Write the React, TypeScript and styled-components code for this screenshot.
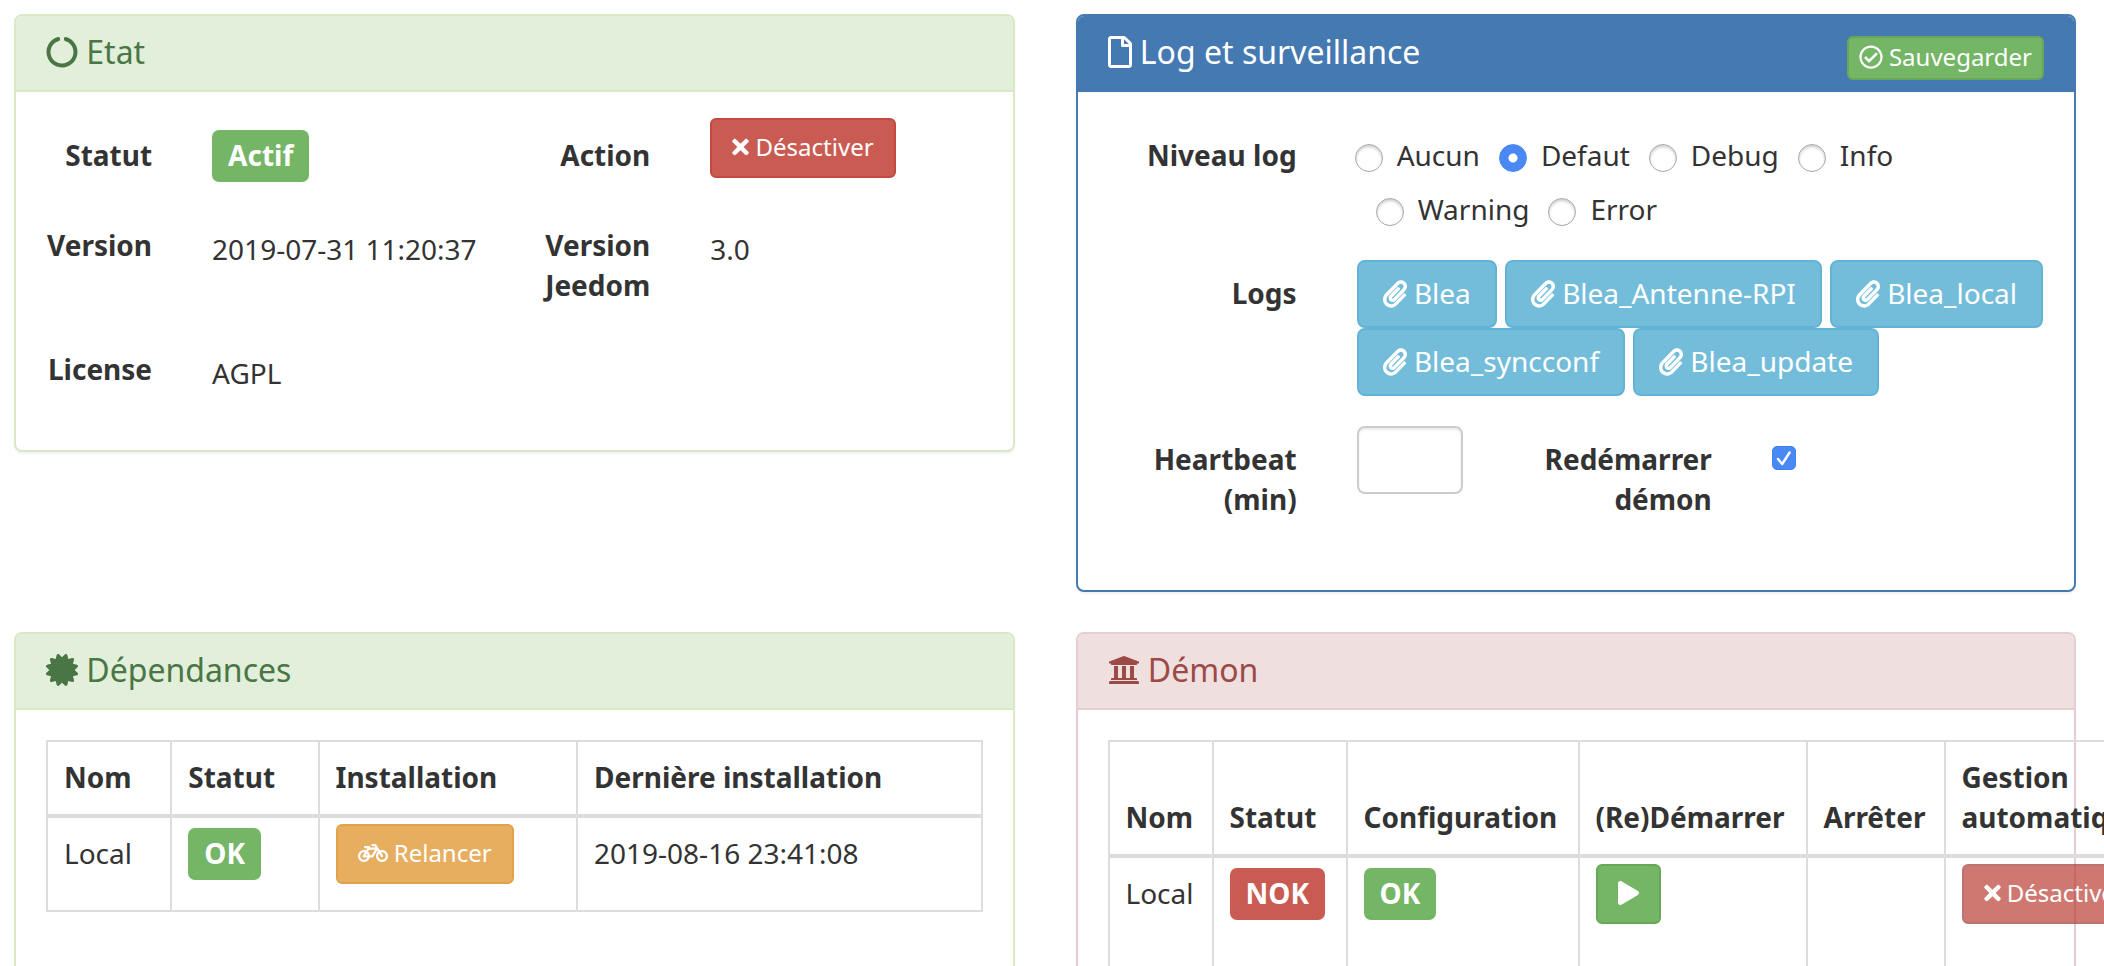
import React, { useState } from "react";
import styled, { createGlobalStyle, css } from "styled-components";
import {
  FaBicycle,
  FaCertificate,
  FaCircleNotch,
  FaPaperclip,
  FaPlay,
  FaRegCheckCircle,
  FaRegFile,
  FaTimes,
  FaUniversity,
} from "react-icons/fa";

const GlobalStyle = createGlobalStyle`
  *, *::before, *::after { box-sizing: border-box; }
  body {
    margin: 0;
    height: 100vh;
    overflow: hidden;
    background: #fff;
    color: #333;
    font: 28px/40px "Noto Sans", sans-serif;
  }
  button, input { font: inherit; color: inherit; }
  button svg, h3 svg { vertical-align: -0.125em; }
`;

const FileIcon = styled(FaRegFile)`
  width: 24px;
`;

const TimesIcon = styled(FaTimes)`
  width: 17px;
`;

const ClipIcon = styled(FaPaperclip)`
  width: 24px;
`;

const BicycleIcon = styled(FaBicycle)`
  width: 30px;
`;

const PlayIcon = styled(FaPlay)`
  width: 21px;
`;

type PanelTone = "success" | "primary" | "danger";
type Tone = "success" | "danger" | "warning" | "info";

const panelTones: Record<PanelTone, { head: string; border: string; text: string }> = {
  success: { head: "#e2efda", border: "#dbe8c8", text: "#4a7645" },
  primary: { head: "#4479b2", border: "#4479b2", text: "#fff" },
  danger: { head: "#efdfde", border: "#e6cdd1", text: "#9c4a45" },
};

const tones: Record<Tone, { fill: string; border: string }> = {
  success: { fill: "#74b566", border: "#67a858" },
  danger: { fill: "#c95b52", border: "#c44a41" },
  warning: { fill: "#e7ae60", border: "#e2a24c" },
  info: { fill: "#73bddb", border: "#62b3d5" },
};

const Page = styled.main`
  display: grid;
  grid-template-columns: repeat(2, minmax(0, 1fr));
  align-items: start;
  gap: 40px 61px;
  padding: 14px 28px 40px 14px;
`;

const PanelBox = styled.section<{ $tone: PanelTone }>`
  border: 2px solid ${(p) => panelTones[p.$tone].border};
  border-radius: 8px;
  background: #fff;
  box-shadow: 0 2px 2px rgba(0, 0, 0, 0.05);
`;

const PanelHead = styled.header<{ $tone: PanelTone }>`
  display: flex;
  align-items: flex-start;
  justify-content: space-between;
  height: 76px;
  padding: 20px 30px;
  border-bottom: 2px solid ${(p) => panelTones[p.$tone].border};
  border-radius: 6px 6px 0 0;
  background: ${(p) => panelTones[p.$tone].head};
  color: ${(p) => panelTones[p.$tone].text};
`;

const PanelTitle = styled.h3`
  margin: 0;
  font-size: 32px;
  font-weight: 400;
  line-height: 32px;
`;

const FormBody = styled.div<{ $tail: number }>`
  display: grid;
  gap: 30px;
  padding: 30px 0 ${(p) => p.$tail}px;
`;

const TableBody = styled.div`
  padding: 30px 30px 70px;
`;

const Row = styled.div<{ $columns: number[] }>`
  display: grid;
  grid-template-columns: ${(p) => p.$columns.map((n) => `minmax(0, ${n}fr)`).join(" ")};
`;

const labelStyle = css`
  padding: 13px 30px 1px;
  font-weight: 700;
  text-align: right;
`;

const Caption = styled.span`
  ${labelStyle}
`;

const FieldLabel = styled.label`
  ${labelStyle}
`;

const Value = styled.div`
  padding: 17px 30px 1px;
`;

const Control = styled.div`
  padding: 0 30px;
`;

const BadgeCell = styled.div`
  padding: 13px 30px 1px;
`;

const Badge = styled.span<{ $tone: Tone }>`
  padding: 6px 16px 8px;
  border-radius: 7px;
  background: ${(p) => tones[p.$tone].fill};
  color: #fff;
  font-weight: 700;
`;

const Button = styled.button<{ $tone: Tone; $size?: "xs" | "sm"; $raise?: number }>`
  display: inline-block;
  margin: ${(p) => (p.$raise ? `-${p.$raise}px 0 ${p.$raise}px` : "0")};
  padding: 11px 24px 13px;
  border: 2px solid ${(p) => tones[p.$tone].border};
  border-radius: 8px;
  background: ${(p) => tones[p.$tone].fill};
  color: #fff;
  white-space: nowrap;
  vertical-align: top;
  cursor: pointer;

  ${(p) =>
    p.$size &&
    css`
      padding: ${p.$size === "sm" ? "9px 20px 11px" : "1px 10px 3px"};
      border-radius: 6px;
      font-size: 24px;
      line-height: 36px;
    `}

  &:disabled {
    border-color: #a03a34;
    background: #bb3f37;
    opacity: 0.7;
    cursor: default;
  }
`;

const RadioGroup = styled.div`
  display: flex;
  flex-wrap: wrap;
  padding: 0 30px;
`;

const RadioLabel = styled.label`
  display: flex;
  align-items: flex-start;
  gap: 14px;
  padding: 13px 0 1px;

  & + & {
    margin-left: 21px;
  }
`;

const Radio = styled.input`
  appearance: none;
  width: 28px;
  height: 28px;
  margin: 9px 0 0 -2px;
  border: 1px solid #a8a8a8;
  border-radius: 50%;
  background: #fff;
  box-shadow: inset 0 2px 3px rgba(0, 0, 0, 0.2);

  &:checked {
    border-color: #4a88f4;
    background: radial-gradient(circle, #fff 0 4px, #4a88f4 5px);
    box-shadow: none;
  }
`;

const LogList = styled.div`
  display: flex;
  flex-wrap: wrap;
  column-gap: 8px;
  padding: 0 30px;
`;

const TextInput = styled.input`
  display: block;
  width: 100%;
  height: 68px;
  padding: 12px 24px;
  border: 2px solid #ccc;
  border-radius: 8px;
  background: #fff;
  box-shadow: inset 0 2px 2px rgba(0, 0, 0, 0.075);
`;

const Checkbox = styled.input`
  appearance: none;
  display: block;
  width: 24px;
  height: 24px;
  margin: 20px 0 0;
  border: 1px solid #b4b4b4;
  border-radius: 5px;
  background: #fff;

  &:checked {
    border-color: #4280ee;
    background: #4a88f4
      url("data:image/svg+xml,%3Csvg xmlns='http://www.w3.org/2000/svg' viewBox='0 0 22 22' fill='none' stroke='white' stroke-width='2.4' stroke-linecap='round' stroke-linejoin='round'%3E%3Cpath d='M5 12l4.2 5L16.600 5.500'/%3E%3C/svg%3E")
      center / 22px 22px no-repeat;
  }
`;

const Table = styled.table<{ $rowHeight: number }>`
  width: 100%;
  border-collapse: collapse;

  th,
  td {
    padding: 15px 16px 17px;
    border: 2px solid #ddd;
    text-align: left;
  }
  th {
    border-bottom-width: 4px;
    vertical-align: bottom;
  }
  td {
    height: ${(p) => p.$rowHeight}px;
    vertical-align: top;
  }
`;

const HeadCell = styled.th<{ $min?: number }>`
  min-width: ${(p) => p.$min ?? 0}px;
`;

function Panel({
  tone,
  icon,
  title,
  action,
  children,
}: {
  tone: PanelTone;
  icon: React.ReactNode;
  title: string;
  action?: React.ReactNode;
  children: React.ReactNode;
}) {
  return (
    <PanelBox $tone={tone}>
      <PanelHead $tone={tone}>
        <PanelTitle>
          {icon} {title}
        </PanelTitle>
        {action}
      </PanelHead>
      {children}
    </PanelBox>
  );
}

const levels = ["Aucun", "Defaut", "Debug", "Info", "Warning", "Error"];
const logs = ["Blea", "Blea_Antenne-RPI", "Blea_local", "Blea_syncconf", "Blea_update"];

export default function App() {
  const [level, setLevel] = useState("Defaut");
  const [heartbeat, setHeartbeat] = useState("");
  const [restart, setRestart] = useState(true);

  return (
    <>
      <GlobalStyle />
      <Page>
        <Panel tone="success" icon={<FaCircleNotch />} title="Etat">
          <FormBody $tail={56}>
            <Row $columns={[2, 4, 2, 4]}>
              <Caption>Statut</Caption>
              <BadgeCell>
                <Badge $tone="success">Actif</Badge>
              </BadgeCell>
              <Caption>Action</Caption>
              <Control>
                <Button type="button" $tone="danger" $size="sm" $raise={4}>
                  <TimesIcon /> Désactiver
                </Button>
              </Control>
            </Row>
            <Row $columns={[2, 4, 2, 4]}>
              <Caption>Version</Caption>
              <Value>2019-07-31 11:20:37</Value>
              <Caption>Version Jeedom</Caption>
              <Value>3.0</Value>
            </Row>
            <Row $columns={[2, 10]}>
              <Caption>License</Caption>
              <Value>AGPL</Value>
            </Row>
          </FormBody>
        </Panel>

        <Panel
          tone="primary"
          icon={<FileIcon />}
          title="Log et surveillance"
          action={
            <Button type="button" $tone="success" $size="xs">
              <FaRegCheckCircle /> Sauvegarder
            </Button>
          }
        >
          <FormBody $tail={70}>
            <Row $columns={[3, 9]}>
              <Caption id="level">Niveau log</Caption>
              <RadioGroup role="radiogroup" aria-labelledby="level">
                {levels.map((name) => (
                  <RadioLabel key={name}>
                    <Radio
                      type="radio"
                      name="level"
                      checked={level === name}
                      onChange={() => setLevel(name)}
                    />
                    {name}
                  </RadioLabel>
                ))}
              </RadioGroup>
            </Row>
            <Row $columns={[3, 9]}>
              <Caption>Logs</Caption>
              <LogList>
                {logs.map((name) => (
                  <Button key={name} type="button" $tone="info">
                    <ClipIcon /> {name}
                  </Button>
                ))}
              </LogList>
            </Row>
            <Row $columns={[3, 2, 3, 4]}>
              <FieldLabel htmlFor="heartbeat">Heartbeat (min)</FieldLabel>
              <Control>
                <TextInput
                  id="heartbeat"
                  type="text"
                  value={heartbeat}
                  onChange={(e) => setHeartbeat(e.target.value)}
                />
              </Control>
              <FieldLabel htmlFor="restart">Redémarrer démon</FieldLabel>
              <Control>
                <Checkbox
                  id="restart"
                  type="checkbox"
                  checked={restart}
                  onChange={(e) => setRestart(e.target.checked)}
                />
              </Control>
            </Row>
          </FormBody>
        </Panel>

        <Panel tone="success" icon={<FaCertificate />} title="Dépendances">
          <TableBody>
            <Table $rowHeight={94}>
              <thead>
                <tr>
                  <HeadCell>Nom</HeadCell>
                  <HeadCell>Statut</HeadCell>
                  <HeadCell>Installation</HeadCell>
                  <HeadCell $min={332}>Dernière installation</HeadCell>
                </tr>
              </thead>
              <tbody>
                <tr>
                  <td>Local</td>
                  <td>
                    <Badge $tone="success">OK</Badge>
                  </td>
                  <td>
                    <Button type="button" $tone="warning" $size="sm" $raise={9}>
                      <BicycleIcon /> Relancer
                    </Button>
                  </td>
                  <td>2019-08-16 23:41:08</td>
                </tr>
              </tbody>
            </Table>
          </TableBody>
        </Panel>

        <Panel tone="danger" icon={<FaUniversity />} title="Démon">
          <TableBody>
            <Table $rowHeight={114}>
              <thead>
                <tr>
                  <HeadCell $min={104}>Nom</HeadCell>
                  <HeadCell $min={134}>Statut</HeadCell>
                  <HeadCell $min={232}>Configuration</HeadCell>
                  <HeadCell $min={228}>(Re)Démarrer</HeadCell>
                  <HeadCell $min={138}>Arrêter</HeadCell>
                  <HeadCell>Gestion automatique</HeadCell>
                </tr>
              </thead>
              <tbody>
                <tr>
                  <td>Local</td>
                  <td>
                    <Badge $tone="danger">NOK</Badge>
                  </td>
                  <td>
                    <Badge $tone="success">OK</Badge>
                  </td>
                  <td>
                    <Button type="button" aria-label="Démarrer" $tone="success" $size="sm" $raise={9}>
                      <PlayIcon />
                    </Button>
                  </td>
                  <td />
                  <td>
                    <Button type="button" disabled $tone="danger" $size="sm" $raise={9}>
                      <TimesIcon /> Désactiver
                    </Button>
                  </td>
                </tr>
              </tbody>
            </Table>
          </TableBody>
        </Panel>
      </Page>
    </>
  );
}
